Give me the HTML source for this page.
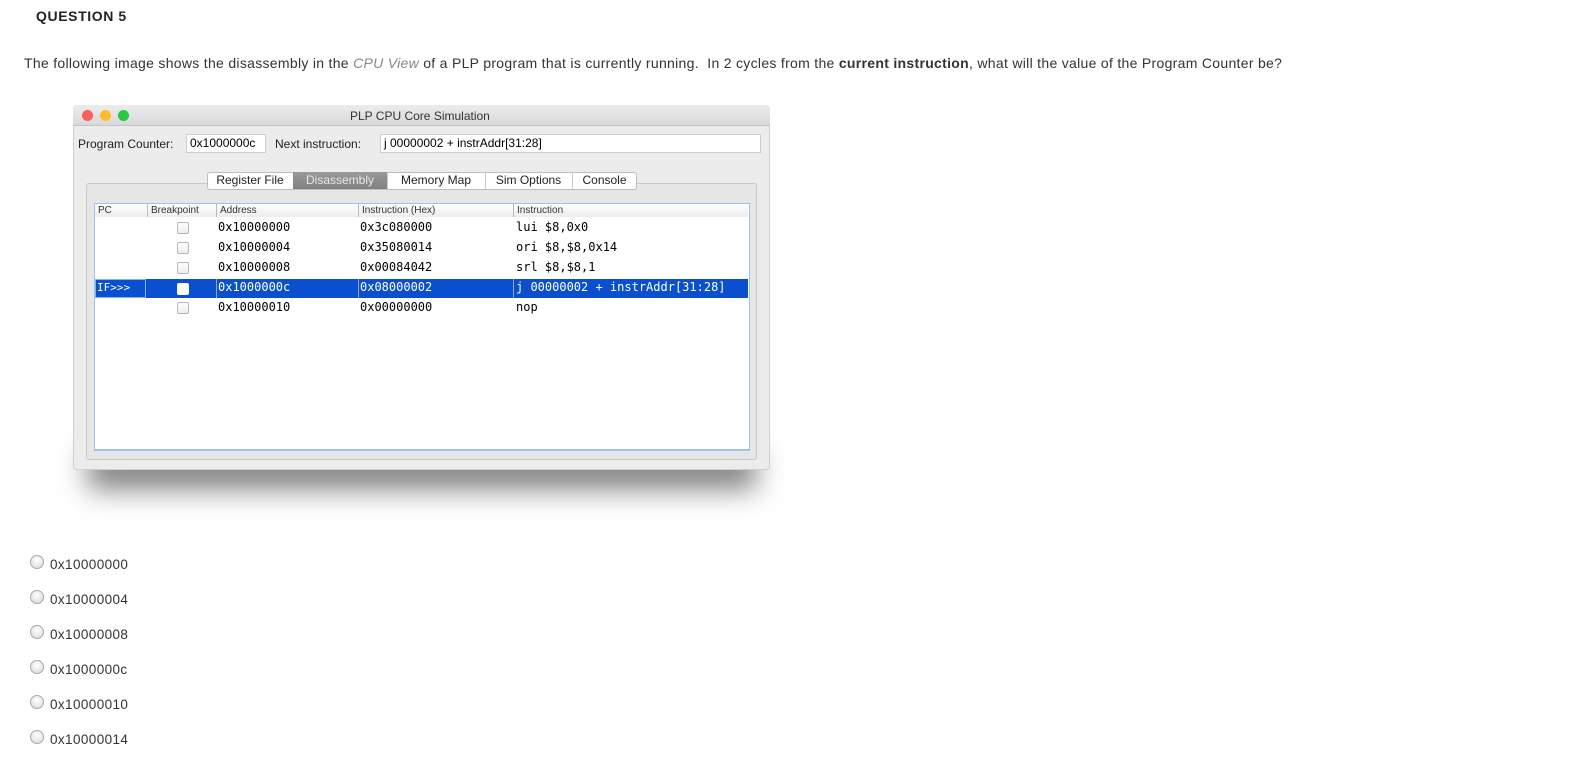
<!DOCTYPE html>
<html><head><style>
body{margin:0;width:1573px;height:781px;background:#fff;font-family:"Liberation Sans",sans-serif;position:relative;overflow:hidden}
.a{position:absolute;white-space:nowrap}
.mono{font-family:"DejaVu Sans Mono","Liberation Mono",monospace;font-size:12px}
.cb{position:absolute;width:10px;height:10px;border:1px solid #b8b8b8;border-radius:2px;background:linear-gradient(#fff,#ececec)}
.radio{position:absolute;left:30px;width:12px;height:12px;border-radius:50%;border:1px solid #a8a8a8;background:radial-gradient(circle at 50% 35%,#fff,#d8d8d8)}
.opt{position:absolute;left:50px;font-size:13.5px;color:#333;letter-spacing:0.4px}
.tab{position:absolute;top:172px;height:17px;font-size:12px;line-height:17px;text-align:center;color:#222;border-right:1px solid #c8c8c8}
.hd{position:absolute;top:204px;font-size:10px;line-height:13px;color:#333;border-left:1px solid #bbb;padding-left:3px}
</style></head><body>
<div class="a" style="left:36px;top:8px;font-size:14px;font-weight:bold;color:#222;letter-spacing:0.6px">QUESTION 5</div>
<div class="a" style="left:24px;top:55px;font-size:14px;color:#333;letter-spacing:0.3px">The following image shows the disassembly in the <i style="color:#888">CPU View</i> of a PLP program that is currently running.&nbsp; In 2 cycles from the <b>current instruction</b>, what will the value of the Program Counter be?</div>

<!-- shadow -->
<div class="a" style="left:90px;top:430px;width:664px;height:35px;box-shadow:0 22px 28px 2px rgba(0,0,0,0.5);background:#999"></div>
<!-- window -->
<div class="a" style="left:73px;top:105px;width:697px;height:365px;background:#ececec;border-radius:4px;border:1px solid #cfcfcf;box-sizing:border-box"></div>
<div class="a" style="left:73px;top:105px;width:697px;height:21px;background:linear-gradient(#ececec,#d9d9d9);border-radius:4px 4px 0 0;border-bottom:1px solid #c4c4c4;box-sizing:border-box"></div>
<div class="a" style="left:82px;top:110px;width:11px;height:11px;border-radius:50%;background:#fc5f57"></div>
<div class="a" style="left:100px;top:110px;width:11px;height:11px;border-radius:50%;background:#fdbc2e"></div>
<div class="a" style="left:118px;top:110px;width:11px;height:11px;border-radius:50%;background:#28c840"></div>
<div class="a" style="left:350px;top:109px;font-size:12px;color:#333">PLP CPU Core Simulation</div>

<div class="a" style="left:78px;top:137px;font-size:12px;color:#222">Program Counter:</div>
<div class="a" style="left:186px;top:134px;width:80px;height:19px;background:#fff;border:1px solid #ccc;box-sizing:border-box;font-size:12px;line-height:17px;padding-left:3px">0x1000000c</div>
<div class="a" style="left:275px;top:137px;font-size:12px;color:#222">Next instruction:</div>
<div class="a" style="left:380px;top:134px;width:381px;height:19px;background:#fff;border:1px solid #ccc;box-sizing:border-box;font-size:12px;line-height:17px;padding-left:3px">j 00000002 + instrAddr[31:28]</div>

<!-- panel -->
<div class="a" style="left:86px;top:183px;width:671px;height:277px;border:1px solid #c8c8c8;border-radius:3px;background:#e6e6e6;box-sizing:border-box"></div>
<div class="a" style="left:207px;top:172px;width:430px;height:18px;background:#fff;border:1px solid #bdbdbd;border-radius:3px;box-sizing:border-box"></div>
<div class="tab" style="left:207px;width:86px">Register File</div>
<div class="tab" style="left:293px;width:94px;background:linear-gradient(#9a9a9a,#808080);color:#e8e8e8">Disassembly</div>
<div class="tab" style="left:387px;width:98px">Memory Map</div>
<div class="tab" style="left:485px;width:87px">Sim Options</div>
<div class="tab" style="left:572px;width:65px;border-right:none">Console</div>

<!-- table -->
<div class="a" style="left:94px;top:203px;width:656px;height:248px;background:#fff;border:1px solid #9cc3ec;border-bottom:2px solid #9cc3ec;box-sizing:border-box"></div>
<div class="a" style="left:95px;top:204px;width:653px;height:13px;background:linear-gradient(#fff,#ececec)"></div>
<div class="hd" style="left:95px;border:none">PC</div>
<div class="hd" style="left:147px">Breakpoint</div>
<div class="hd" style="left:216px">Address</div>
<div class="hd" style="left:358px">Instruction (Hex)</div>
<div class="hd" style="left:513px">Instruction</div>

<div class="a" style="left:95px;top:279px;width:653px;height:19px;background:#0a4fcf"></div>
<div class="a" style="left:95px;top:279px;width:51px;height:19px;border:1px solid #7fb0ff;box-sizing:border-box"></div>

<div class="cb" style="left:177px;top:222px"></div>
<div class="cb" style="left:177px;top:242px"></div>
<div class="cb" style="left:177px;top:262px"></div>
<div class="cb" style="left:177px;top:283px;background:#fff;border-color:#fff"></div>
<div class="cb" style="left:177px;top:302px"></div>

<div class="a mono" style="left:218px;top:220px">0x10000000</div>
<div class="a mono" style="left:218px;top:240px">0x10000004</div>
<div class="a mono" style="left:218px;top:260px">0x10000008</div>
<div class="a mono" style="left:218px;top:280px;color:#fff">0x1000000c</div>
<div class="a mono" style="left:218px;top:300px">0x10000010</div>
<div class="a mono" style="left:360px;top:220px">0x3c080000</div>
<div class="a mono" style="left:360px;top:240px">0x35080014</div>
<div class="a mono" style="left:360px;top:260px">0x00084042</div>
<div class="a mono" style="left:360px;top:280px;color:#fff">0x08000002</div>
<div class="a mono" style="left:360px;top:300px">0x00000000</div>
<div class="a mono" style="left:516px;top:220px">lui $8,0x0</div>
<div class="a mono" style="left:516px;top:240px">ori $8,$8,0x14</div>
<div class="a mono" style="left:516px;top:260px">srl $8,$8,1</div>
<div class="a mono" style="left:516px;top:280px;color:#fff">j 00000002 + instrAddr[31:28]</div>
<div class="a mono" style="left:516px;top:300px">nop</div>
<div class="a mono" style="left:97px;top:281px;color:#fff;font-size:11px">IF&gt;&gt;&gt;</div>
<div class="a" style="left:216px;top:279px;width:1px;height:19px;background:#8ab"></div>
<div class="a" style="left:358px;top:279px;width:1px;height:19px;background:#8ab"></div>
<div class="a" style="left:513px;top:279px;width:1px;height:19px;background:#8ab"></div>

<div class="radio" style="top:555px"></div><div class="opt" style="top:557px">0x10000000</div>
<div class="radio" style="top:590px"></div><div class="opt" style="top:592px">0x10000004</div>
<div class="radio" style="top:625px"></div><div class="opt" style="top:627px">0x10000008</div>
<div class="radio" style="top:660px"></div><div class="opt" style="top:662px">0x1000000c</div>
<div class="radio" style="top:695px"></div><div class="opt" style="top:697px">0x10000010</div>
<div class="radio" style="top:730px"></div><div class="opt" style="top:732px">0x10000014</div>
</body></html>
